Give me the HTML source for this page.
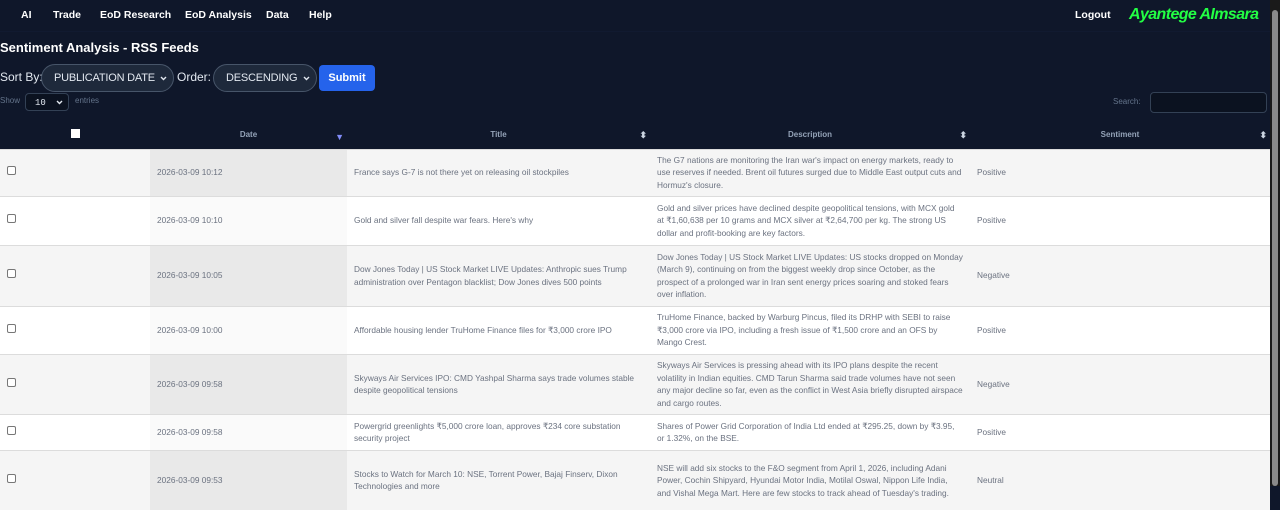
<!DOCTYPE html>
<html><head><meta charset="utf-8"><style>
*{box-sizing:border-box;margin:0;padding:0}
html,body{width:1280px;height:486px;overflow:hidden;background:#0f172a;font-family:"Liberation Sans",sans-serif}
.nav{height:32px;background:#0f172a;position:relative;border-bottom:1px solid #111a30}
.nav a{position:absolute;top:9px;color:#fff;font-weight:bold;font-size:10.5px;white-space:nowrap}
.logo{position:absolute;left:1129px;top:6px;color:#22ff44;font:bold italic 16px "Liberation Sans",sans-serif;letter-spacing:-0.6px;white-space:nowrap}
h1{position:absolute;left:0;top:40px;color:#fff;font-size:13px}
.lbl{color:#e2e8f0;font-size:12px;position:absolute;top:70px;white-space:nowrap}
.sel{position:absolute;top:64px;height:28px;border:1px solid #475569;border-radius:14px;background:#1e293b;color:#e2e8f0;font-size:11px;letter-spacing:-0.2px;padding:7px 0 0 12px;white-space:nowrap}
.sel svg{position:absolute;right:6px;top:11px}
.btn{position:absolute;left:319px;top:65px;width:56px;height:26px;background:#2563eb;border-radius:4px;color:#fff;font-weight:bold;font-size:11px;text-align:center;line-height:26px}
.sm{position:absolute;color:#64748b;font-size:8px}
table{position:absolute;left:0;top:121px;width:1270px;border-collapse:collapse;font-size:8.3px;color:#6b7280;table-layout:fixed}
th{height:28px;color:#94a3b8;font-size:8px;font-weight:bold;text-align:center;position:relative}
th .s{position:absolute;right:3px;top:9px;font-size:9px;color:#cbd5e1}
td{border-top:1px solid #dcdcdc;vertical-align:middle;line-height:12.5px;padding:0 7px;overflow:hidden}
tr.o td{background:#f5f5f5}tr.o td.d{background:#e9e9e9}
tr.e td{background:#fff}tr.e td.d{background:#fafafa}
.cb{display:inline-block;width:9px;height:9px;border:1px solid #777;border-radius:2px;background:#fff}
.sb{position:absolute;left:1270px;top:0;width:10px;height:486px;background:#1a1a1a}
.sb div{position:absolute;left:2px;top:10px;width:6px;height:476px;background:#8a8a8a;border-radius:3px}
</style></head><body>
<div class="nav">
<a style="left:21px">AI</a><a style="left:53px">Trade</a><a style="left:100px">EoD Research</a><a style="left:185px">EoD Analysis</a><a style="left:266px">Data</a><a style="left:309px">Help</a>
<a style="left:1075px">Logout</a><span class="logo">Ayantege AImsara</span>
</div>
<h1>Sentiment Analysis - RSS Feeds</h1>
<span class="lbl" style="left:0">Sort By:</span>
<div class="sel" style="left:41px;width:133px">PUBLICATION DATE<svg width="7" height="5" viewBox="0 0 7 5"><path d="M1 1l2.5 2.5L6 1" stroke="#e2e8f0" stroke-width="1.4" fill="none"/></svg></div>
<span class="lbl" style="left:177px">Order:</span>
<div class="sel" style="left:213px;width:104px">DESCENDING<svg width="7" height="5" viewBox="0 0 7 5"><path d="M1 1l2.5 2.5L6 1" stroke="#e2e8f0" stroke-width="1.4" fill="none"/></svg></div>
<div class="btn">Submit</div>
<span class="sm" style="left:0;top:96px">Show</span>
<div style="position:absolute;left:25px;top:93px;width:44px;height:18px;border:1px solid #334155;border-radius:4px;background:#0b1220;color:#e2e8f0;font:9px 'Liberation Mono',monospace;padding:4px 0 0 9px">10<svg style="position:absolute;right:5px;top:6px" width="7" height="5" viewBox="0 0 7 5"><path d="M1 1l2.5 2.5L6 1" stroke="#e2e8f0" stroke-width="1.4" fill="none"/></svg></div>
<span class="sm" style="left:75px;top:96px">entries</span>
<span class="sm" style="left:1113px;top:97px">Search:</span>
<div style="position:absolute;left:1150px;top:92px;width:117px;height:21px;border:1px solid #334155;border-radius:4px;background:#0b1220"></div>
<table>
<colgroup><col style="width:150px"><col style="width:197px"><col style="width:303px"><col style="width:320px"><col style="width:300px"></colgroup>
<tr><th><span style="display:inline-block;width:9px;height:9px;background:#fff"></span></th><th>Date<span class="s" style="color:#818cf8;top:11px">▼</span></th><th>Title<span class="s">⬍</span></th><th>Description<span class="s">⬍</span></th><th>Sentiment<span class="s">⬍</span></th></tr>
<tr class="o" style="height:47px"><td><span class="cb"></span></td><td class="d">2026-03-09 10:12</td><td>France says G-7 is not there yet on releasing oil stockpiles</td><td>The G7 nations are monitoring the Iran war's impact on energy markets, ready to use reserves if needed. Brent oil futures surged due to Middle East output cuts and Hormuz's closure.</td><td>Positive</td></tr>
<tr class="e" style="height:49px"><td><span class="cb"></span></td><td class="d">2026-03-09 10:10</td><td>Gold and silver fall despite war fears. Here's why</td><td>Gold and silver prices have declined despite geopolitical tensions, with MCX gold at ₹1,60,638 per 10 grams and MCX silver at ₹2,64,700 per kg. The strong US dollar and profit-booking are key factors.</td><td>Positive</td></tr>
<tr class="o" style="height:61px"><td><span class="cb"></span></td><td class="d">2026-03-09 10:05</td><td>Dow Jones Today | US Stock Market LIVE Updates: Anthropic sues Trump administration over Pentagon blacklist; Dow Jones dives 500 points</td><td>Dow Jones Today | US Stock Market LIVE Updates: US stocks dropped on Monday (March 9), continuing on from the biggest weekly drop since October, as the prospect of a prolonged war in Iran sent energy prices soaring and stoked fears over inflation.</td><td>Negative</td></tr>
<tr class="e" style="height:48px"><td><span class="cb"></span></td><td class="d">2026-03-09 10:00</td><td>Affordable housing lender TruHome Finance files for ₹3,000 crore IPO</td><td>TruHome Finance, backed by Warburg Pincus, filed its DRHP with SEBI to raise ₹3,000 crore via IPO, including a fresh issue of ₹1,500 crore and an OFS by Mango Crest.</td><td>Positive</td></tr>
<tr class="o" style="height:60px"><td><span class="cb"></span></td><td class="d">2026-03-09 09:58</td><td>Skyways Air Services IPO: CMD Yashpal Sharma says trade volumes stable despite geopolitical tensions</td><td>Skyways Air Services is pressing ahead with its IPO plans despite the recent volatility in Indian equities. CMD Tarun Sharma said trade volumes have not seen any major decline so far, even as the conflict in West Asia briefly disrupted airspace and cargo routes.</td><td>Negative</td></tr>
<tr class="e" style="height:36px"><td><span class="cb"></span></td><td class="d">2026-03-09 09:58</td><td>Powergrid greenlights ₹5,000 crore loan, approves ₹234 core substation security project</td><td>Shares of Power Grid Corporation of India Ltd ended at ₹295.25, down by ₹3.95, or 1.32%, on the BSE.</td><td>Positive</td></tr>
<tr class="o" style="height:60px"><td><span class="cb"></span></td><td class="d">2026-03-09 09:53</td><td>Stocks to Watch for March 10: NSE, Torrent Power, Bajaj Finserv, Dixon Technologies and more</td><td>NSE will add six stocks to the F&amp;O segment from April 1, 2026, including Adani Power, Cochin Shipyard, Hyundai Motor India, Motilal Oswal, Nippon Life India, and Vishal Mega Mart. Here are few stocks to track ahead of Tuesday's trading.</td><td>Neutral</td></tr>
</table>
<div class="sb"><div></div></div>
</body></html>
